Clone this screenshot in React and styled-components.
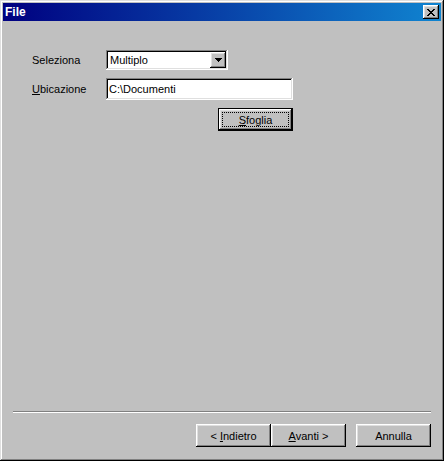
import React from 'react';
import styled, { createGlobalStyle } from 'styled-components';

const GlobalStyle = createGlobalStyle`
  html, body {
    margin: 0;
    padding: 0;
    background: #c0c0c0;
  }
  body {
    font-family: "Liberation Sans", Arial, sans-serif;
    font-size: 11px;
    color: #000;
  }
`;

const raised = `
  box-shadow:
    inset -1px -1px #000,
    inset 1px 1px #fff,
    inset -2px -2px #808080,
    inset 2px 2px #dfdfdf;
`;

const sunken = `
  box-shadow:
    inset -1px -1px #fff,
    inset 1px 1px #808080,
    inset -2px -2px #dfdfdf,
    inset 2px 2px #000;
`;

const Window = styled.div`
  box-sizing: border-box;
  width: 444px;
  height: 461px;
  background: #c0c0c0;
  padding: 3px;
  display: flex;
  flex-direction: column;
  box-shadow:
    inset -1px -1px #000,
    inset 1px 1px #dfdfdf,
    inset -2px -2px #808080,
    inset 2px 2px #fff;
`;

const TitleBar = styled.div`
  height: 18px;
  display: flex;
  align-items: center;
  justify-content: space-between;
  padding: 0 2px 0 2px;
  background: linear-gradient(to right, #000080, #1084d0);
  flex-shrink: 0;
`;

const Title = styled.span`
  color: #fff;
  font-weight: bold;
  font-size: 12px;
  line-height: 1;
`;

const CloseButton = styled.div`
  width: 16px;
  height: 14px;
  background: #c0c0c0;
  display: flex;
  align-items: center;
  justify-content: center;
  ${raised}
`;

const Body = styled.div`
  flex: 1;
  display: flex;
  flex-direction: column;
  padding: 29px 0 11px;
`;

const Form = styled.div`
  display: grid;
  grid-template-columns: 74px auto;
  justify-content: start;
  align-items: center;
  row-gap: 8px;
  padding-left: 29px;
`;

const Label = styled.label`
  white-space: nowrap;
`;

const Key = styled.span`
  text-decoration: underline;
  text-underline-offset: 1px;
`;

const SelectBox = styled.div`
  box-sizing: border-box;
  width: 122px;
  height: 20px;
  background: #fff;
  display: flex;
  align-items: center;
  justify-content: space-between;
  padding: 2px 2px 2px 4px;
  ${sunken}
`;

const DropButton = styled.div`
  width: 16px;
  height: 16px;
  background: #c0c0c0;
  display: flex;
  align-items: center;
  justify-content: center;
  ${raised}
`;

const TextField = styled.div`
  box-sizing: border-box;
  width: 187px;
  height: 22px;
  background: #fff;
  display: flex;
  align-items: center;
  padding: 0 3px;
  ${sunken}
`;

const Button = styled.div`
  position: relative;
  box-sizing: border-box;
  width: 75px;
  height: 23px;
  background: #c0c0c0;
  display: flex;
  align-items: center;
  justify-content: center;
  ${raised}
  ${({ $default }) =>
    $default &&
    `
    box-shadow:
      inset -1px -1px #000,
      inset 1px 1px #000,
      inset -2px -2px #000,
      inset 2px 2px #fff,
      inset -3px -3px #808080,
      inset 3px 3px #dfdfdf;
    &::after {
      content: '';
      position: absolute;
      inset: 4px;
      border: 1px dotted #000;
    }
  `}
`;

const BrowseButton = styled(Button)`
  grid-column: 2;
  justify-self: end;
`;

const Spacer = styled.div`
  flex: 1;
`;

const Separator = styled.div`
  margin: 0 10px;
  height: 0;
  border-top: 1px solid #808080;
  border-bottom: 1px solid #fff;
`;

const Footer = styled.div`
  display: flex;
  justify-content: flex-end;
  padding: 11px 10px 0 0;
`;

const CancelButton = styled(Button)`
  margin-left: 10px;
`;

const App = () => (
  <>
    <GlobalStyle />
    <Window>
      <TitleBar>
        <Title>File</Title>
        <CloseButton>
          <svg width="8" height="7" viewBox="0 0 8 7">
            <path
              d="M0 0h2v1h1v1h2V1h1V0h2v1H7v1H6v1H5v1h1v1h1v1h1v1H6V6H5V5H3v1H2v1H0V6h1V5h1V4h1V3H2V2H1V1H0z"
              fill="#000"
            />
          </svg>
        </CloseButton>
      </TitleBar>
      <Body>
        <Form>
          <Label>Seleziona</Label>
          <SelectBox>
            <span>Multiplo</span>
            <DropButton>
              <svg width="7" height="4" viewBox="0 0 7 4">
                <path d="M0 0h7v1H6v1H5v1H4v1H3V3H2V2H1V1H0z" fill="#000" />
              </svg>
            </DropButton>
          </SelectBox>
          <Label>
            <Key>U</Key>bicazione
          </Label>
          <TextField>C:\Documenti</TextField>
          <BrowseButton $default>
            <span>
              <Key>S</Key>foglia
            </span>
          </BrowseButton>
        </Form>
        <Spacer />
        <Separator />
        <Footer>
          <Button>
            <span>
              &lt; <Key>I</Key>ndietro
            </span>
          </Button>
          <Button>
            <span>
              <Key>A</Key>vanti &gt;
            </span>
          </Button>
          <CancelButton>Annulla</CancelButton>
        </Footer>
      </Body>
    </Window>
  </>
);

export default App;
